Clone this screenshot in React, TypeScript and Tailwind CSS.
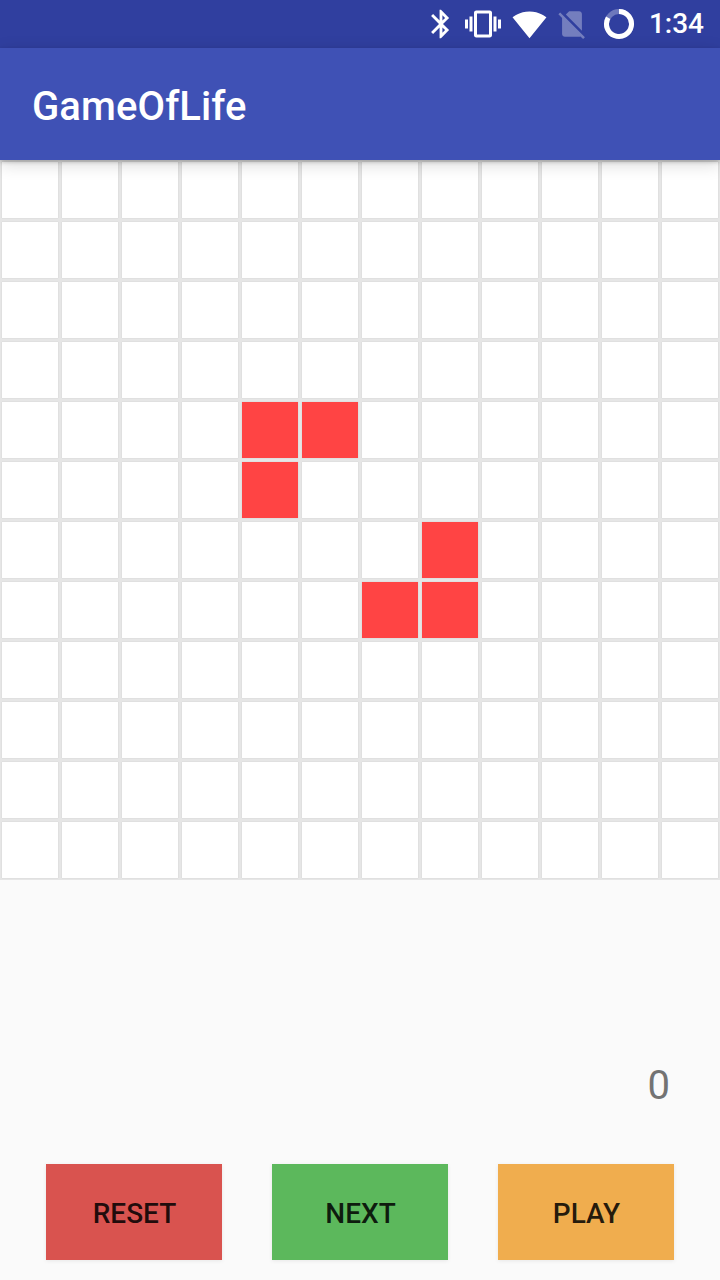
const ROWS = 12;
const COLS = 12;
const alive = new Set(["4-4", "4-5", "5-4", "6-7", "7-6", "7-7"]);

const buttons = [
  { label: "RESET", color: "bg-[#d9534f]" },
  { label: "NEXT", color: "bg-[#5cb85c]" },
  { label: "PLAY", color: "bg-[#f0ad4e]" },
];

function StatusBar() {
  return (
    <div className="h-[48px] bg-[#303f9f] flex items-center justify-end pr-[16px] text-white">
      {/* bluetooth */}
      <svg width="34" height="34" viewBox="0 0 24 24" fill="currentColor">
        <path d="M17.71 7.71L12 2h-1v7.59L6.41 5 5 6.41 10.59 12 5 17.59 6.41 19 11 14.41V22h1l5.71-5.71-4.3-4.29 4.3-4.29zM13 5.83l1.88 1.88L13 9.59V5.83zm1.88 10.46L13 18.17v-3.76l1.88 1.88z" />
      </svg>
      {/* vibrate */}
      <svg className="ml-[7px]" width="36" height="36" viewBox="0 0 24 24" fill="currentColor">
        <path d="M0 15h2V9H0v6zm3 2h2V7H3v10zm19-8v6h2V9h-2zm-3 8h2V7h-2v10zM16.5 3h-9C6.67 3 6 3.67 6 4.5v15c0 .83.67 1.5 1.5 1.5h9c.83 0 1.5-.67 1.5-1.5v-15c0-.83-.67-1.5-1.5-1.5zM16 19H8V5h8v14z" />
      </svg>
      {/* wifi */}
      <svg className="ml-[11px]" width="35" height="35" viewBox="0 0 24 24" fill="currentColor">
        <path d="M12.01 21.49L23.64 7c-.45-.34-4.93-4-11.64-4C5.28 3 .81 6.66.36 7l11.64 14.5.01-.01z" />
      </svg>
      {/* no sim */}
      <svg className="ml-[8px]" width="34" height="34" viewBox="0 0 24 24" fill="currentColor" fillOpacity="0.33">
        <path d="M18.99 5c0-1.1-.89-2-1.99-2h-7L7.66 5.34 19 16.68 18.99 5zM3.65 3.88L2.38 5.15 5 7.77V19c0 1.1.9 2 2 2h10.01c.35 0 .67-.1.96-.26l1.88 1.88 1.27-1.27L3.65 3.88z" />
      </svg>
      {/* battery ring */}
      <svg className="ml-[14px]" width="32" height="32" viewBox="0 0 32 32" fill="none">
        <circle cx="16" cy="16" r="12.5" stroke="white" strokeOpacity="0.3" strokeWidth="5" />
        <path d="M16 3.5A12.5 12.5 0 1 1 5.17 9.75" stroke="white" strokeWidth="5" />
      </svg>
      <span className="ml-[14px] text-[28px] leading-none font-medium font-['Roboto',sans-serif]">1:34</span>
    </div>
  );
}

export default function App() {
  return (
    <div className="w-[720px] h-[1280px] flex flex-col bg-[#fafafa] overflow-hidden font-['Roboto',sans-serif]">
      <StatusBar />
      <div className="h-[112px] bg-[#3f51b5] relative z-10 flex items-center pl-[32px] pt-[6px] shadow-[0_2px_4px_rgba(0,0,0,0.2),0_4px_16px_rgba(0,0,0,0.16)]">
        <h1 className="text-[40px] font-medium text-white tracking-[0.1px]">GameOfLife</h1>
      </div>

      {/* board */}
      <div className="grid grid-cols-12 bg-[#e6e6e6]">
        {Array.from({ length: ROWS * COLS }, (_, i) => {
          const key = `${Math.floor(i / COLS)}-${i % COLS}`;
          return (
            <div key={key} className="h-[60px] p-[2px]">
              <div
                className={`h-full shadow-[0_0_1px_rgba(0,0,0,0.14)] ${
                  alive.has(key) ? "bg-[#ff4444]" : "bg-white"
                }`}
              />
            </div>
          );
        })}
      </div>

      <div className="flex-1 flex flex-col justify-end">
        <div className="text-right pr-[50px] text-[40px] leading-[50px] text-[#737373]">0</div>
        <div className="flex justify-between px-[46px] pt-[53px] pb-[20px]">
          {buttons.map((b) => (
            <button
              key={b.label}
              className={`w-[176px] h-[96px] pt-[4px] pl-[1px] ${b.color} text-[28px] font-medium text-black/85 shadow-[0_1px_4px_rgba(0,0,0,0.08)]`}
            >
              {b.label}
            </button>
          ))}
        </div>
      </div>
    </div>
  );
}
